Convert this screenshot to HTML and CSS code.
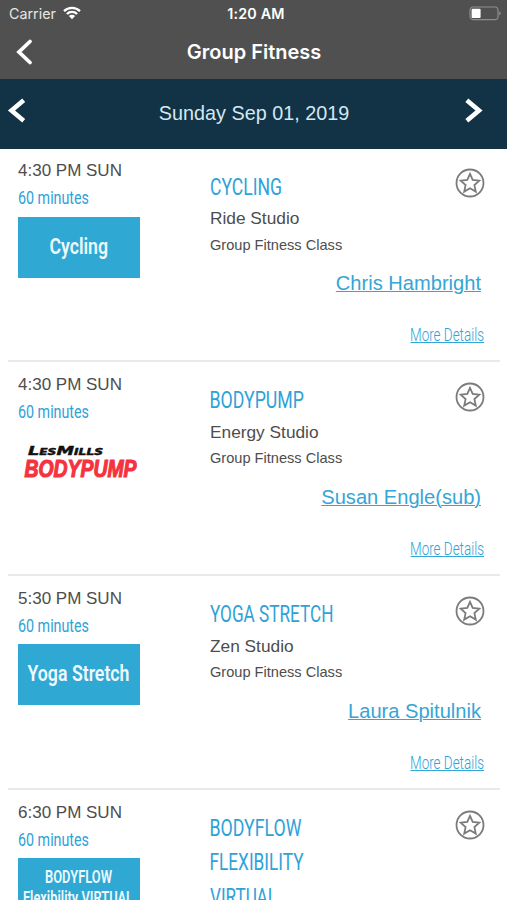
FILE: index.html
```html
<!DOCTYPE html>
<html lang="en">
<head>
<meta charset="utf-8">
<title>Group Fitness</title>
<link rel="stylesheet" href="styles.css">
</head>
<body>
<svg width="0" height="0" class="defs">
  <symbol id="star" viewBox="0 0 30 30">
    <circle cx="15" cy="15" r="13.5"/>
    <path d="M15 5.9l2.7 6 6.6.8-4.9 4.4 1.4 6.5-5.8-3.3-5.8 3.3 1.4-6.5-4.9-4.4 6.6-.8z"/>
  </symbol>
</svg>
<header class="top">
  <div class="status">
    <div class="carrier"><span>Carrier</span>
      <svg width="18" height="14" viewBox="0 0 18 14"><g fill="none" stroke="#fff" stroke-width="2.3"><path d="M1 5.1a11.4 11.4 0 0 1 16 0"/><path d="M3.9 8a7.3 7.3 0 0 1 10.2 0"/></g><path d="M5.9 10a4.4 4.4 0 0 1 6.2 0L9 13.2z" fill="#fff"/></svg>
    </div>
    <div class="clock">1:20 AM</div>
    <div class="battery">
      <svg width="32" height="15" viewBox="0 0 32 15"><rect x="1" y="1" width="28" height="12.6" rx="3.2" fill="none" stroke="#8d8d8d" stroke-width="1.2"/><rect x="2.6" y="2.7" width="9" height="9.2" rx="1" fill="#fff"/><path d="M30.2 5.2q1.5.8 1.5 2.1t-1.5 2.1z" fill="#8d8d8d"/></svg>
    </div>
  </div>
  <div class="nav">
    <svg width="20" height="28" viewBox="0 0 20 28"><path d="M15 3.500L4 14l11 10.500"/></svg>
    <h1>Group Fitness</h1>
  </div>
</header>
<div class="datebar">
  <svg width="20" height="28" viewBox="0 0 20 28"><path d="M16.700 3.300L4.500 13.600l12.200 10.100"/></svg>
  <span>Sunday Sep 01, 2019</span>
  <svg width="20" height="28" viewBox="0 0 20 28"><path d="M3.800 3.300L16 13.600 3.800 23.700"/></svg>
</div>
<main>
  <article class="row">
    <div class="when">
      <div class="time">4:30 PM SUN</div>
      <svg class="mins" width="74" height="30"><text x="0" y="22.500" textLength="71" lengthAdjust="spacingAndGlyphs">60 minutes</text></svg>
      <svg class="tile" width="122" height="61"><text x="31.5" y="37" textLength="58.500" lengthAdjust="spacingAndGlyphs">Cycling</text></svg>
    </div>
    <div class="info">
      <div class="head">
        <svg class="title" width="160" height="34"><text x="0" y="26" textLength="72" lengthAdjust="spacingAndGlyphs">CYCLING</text></svg>
        <svg class="star"><use href="#star"/></svg>
      </div>
      <div class="room">Ride Studio</div>
      <div class="kind">Group Fitness Class</div>
      <a class="coach">Chris Hambright</a>
      <svg class="more" width="75" height="24"><text x="0" y="17.500" textLength="74" lengthAdjust="spacingAndGlyphs">More Details</text><path d="M.5 19.500h73.500"/></svg>
    </div>
  </article>
  <article class="row">
    <div class="when">
      <div class="time">4:30 PM SUN</div>
      <svg class="mins" width="74" height="30"><text x="0" y="22.500" textLength="71" lengthAdjust="spacingAndGlyphs">60 minutes</text></svg>
      <svg class="logo" width="122" height="61">
        <text class="brand" x="10" y="24" textLength="75" lengthAdjust="spacingAndGlyphs">LesMills</text>
        <text class="pump" x="6.500" y="45.500" textLength="112" lengthAdjust="spacingAndGlyphs">BODYPUMP</text>
      </svg>
    </div>
    <div class="info">
      <div class="head">
        <svg class="title" width="160" height="34"><text x="-.5" y="26" textLength="94.500" lengthAdjust="spacingAndGlyphs">BODYPUMP</text></svg>
        <svg class="star"><use href="#star"/></svg>
      </div>
      <div class="room">Energy Studio</div>
      <div class="kind">Group Fitness Class</div>
      <a class="coach">Susan Engle(sub)</a>
      <svg class="more" width="75" height="24"><text x="0" y="17.500" textLength="74" lengthAdjust="spacingAndGlyphs">More Details</text><path d="M.5 19.500h73.500"/></svg>
    </div>
  </article>
  <article class="row">
    <div class="when">
      <div class="time">5:30 PM SUN</div>
      <svg class="mins" width="74" height="30"><text x="0" y="22.500" textLength="71" lengthAdjust="spacingAndGlyphs">60 minutes</text></svg>
      <svg class="tile" width="122" height="61"><text x="9.500" y="37" textLength="102" lengthAdjust="spacingAndGlyphs">Yoga Stretch</text></svg>
    </div>
    <div class="info">
      <div class="head">
        <svg class="title" width="160" height="34"><text x="0" y="26" textLength="123.500" lengthAdjust="spacingAndGlyphs">YOGA STRETCH</text></svg>
        <svg class="star"><use href="#star"/></svg>
      </div>
      <div class="room">Zen Studio</div>
      <div class="kind">Group Fitness Class</div>
      <a class="coach">Laura Spitulnik</a>
      <svg class="more" width="75" height="24"><text x="0" y="17.500" textLength="74" lengthAdjust="spacingAndGlyphs">More Details</text><path d="M.5 19.500h73.500"/></svg>
    </div>
  </article>
  <article class="row">
    <div class="when">
      <div class="time">6:30 PM SUN</div>
      <svg class="mins" width="74" height="30"><text x="0" y="22.500" textLength="71" lengthAdjust="spacingAndGlyphs">60 minutes</text></svg>
      <svg class="tile two" width="122" height="61"><text x="27" y="25" textLength="67" lengthAdjust="spacingAndGlyphs">BODYFLOW</text><text x="5" y="46" textLength="110" lengthAdjust="spacingAndGlyphs">Flexibility VIRTUAL</text></svg>
    </div>
    <div class="info">
      <div class="head">
        <svg class="title" width="160" height="102"><text x="-.5" y="26" textLength="92" lengthAdjust="spacingAndGlyphs">BODYFLOW</text><text x="-.5" y="60.200" textLength="94" lengthAdjust="spacingAndGlyphs">FLEXIBILITY</text><text x="0" y="94.500" textLength="67" lengthAdjust="spacingAndGlyphs">VIRTUAL</text></svg>
        <svg class="star"><use href="#star"/></svg>
      </div>
    </div>
  </article>
</main>
</body>
</html>
```
FILE: styles.css
```css
* { box-sizing: border-box; }
html { overflow: hidden; }
body {
  margin: 0;
  width: 507px;
  height: 900px;
  overflow: hidden;
  background: #fff;
  color: #4d4d4d;
  font-family: "Liberation Sans", Arial, sans-serif;
}
svg { display: block; flex: none; overflow: visible; }
.defs { display: none; }
.top { height: 79px; background: #505050; color: #fff; }
.status {
  display: grid;
  grid-template-columns: 1fr auto 1fr;
  height: 27px;
  padding: 0 6px 0 9px;
  align-items: center;
  font-family: Inter, sans-serif;
  font-size: 14.3px;
}
.carrier { display: flex; gap: 7px; align-items: center; color: #e6e6e6; }
.carrier svg { margin-top: -2px; }
.clock { font-weight: 600; letter-spacing: 0.2px; padding-left: 2px; }
.battery { display: flex; justify-content: flex-end; }
.nav {
  display: grid;
  grid-template-columns: 40px 1fr 40px;
  align-items: center;
  height: 50px;
  padding: 0 15px;
}
.nav h1 {
  margin: 0;
  padding-left: 1px;
  text-align: center;
  font: 600 20px/26px Inter, sans-serif;
}
.nav path, .datebar path { fill: none; stroke: #fff; stroke-width: 3.8; stroke-linecap: round; }
.datebar path { stroke-linecap: butt; stroke-width: 4.6; }
.datebar {
  display: flex;
  justify-content: space-between;
  align-items: center;
  height: 69.6px;
  padding: 0 24px 5px 7px;
  background: #123245;
  color: #d5e7f2;
  font-size: 19.8px;
}
.datebar span { padding: 5px 0 0 18px; }
.row {
  display: grid;
  grid-template-columns: 192px 1fr;
  height: 213.8px;
  margin: 0 7px 0 8px;
  padding: 0 15px 0 10px;
  border-bottom: 2px solid #e9e9e9;
}
.when { padding-top: 12.8px; }
.time { font-size: 17px; line-height: 20px; }
.mins text, .title text, .more text, .tile text { font-family: Roboto, sans-serif; }
.mins text { font-size: 18.5px; font-weight: 450; fill: #2ea2d8; }
.tile, .logo { margin-top: 5.5px; }
.tile { background: #30a8d4; }
.tile text { fill: #eef9fd; font-size: 22px; font-weight: 600; }
.tile.two text { font-size: 18px; }
.logo .brand { font: italic bold 13px "DejaVu Sans", sans-serif; font-variant-caps: small-caps; fill: #111; stroke: #111; stroke-width: 0.5; }
.logo .pump { font: italic bold 24px "Liberation Sans", sans-serif; fill: #f5333f; stroke: #f5333f; stroke-width: 1.2; }
.info { display: flex; flex-direction: column; padding-top: 20px; }
.head { display: flex; justify-content: space-between; align-items: flex-start; }
.title text { font-size: 24.5px; font-weight: 450; fill: #2ea2d8; }
.star { width: 30px; height: 30px; fill: none; stroke: #7b7b7b; stroke-width: 1.8; }
.info .star { margin-top: -0.3px; }
.room { margin-top: 1.5px; font-size: 17.3px; line-height: 28px; }
.kind { margin-top: 2.5px; font-size: 14.6px; line-height: 20px; }
.coach {
  margin: 16.8px 4px 0 0;
  align-self: flex-end;
  color: #36a5d5;
  font-size: 20.1px;
  line-height: 24px;
  text-decoration: underline;
  text-decoration-thickness: 1px;
}
.more { margin: 27.7px 0 0; align-self: flex-end; }
.more text { font-size: 18.5px; font-weight: 350; fill: #2ea2d8; }
.more path { stroke: #36a5d5; stroke-width: 1.2; }
```
